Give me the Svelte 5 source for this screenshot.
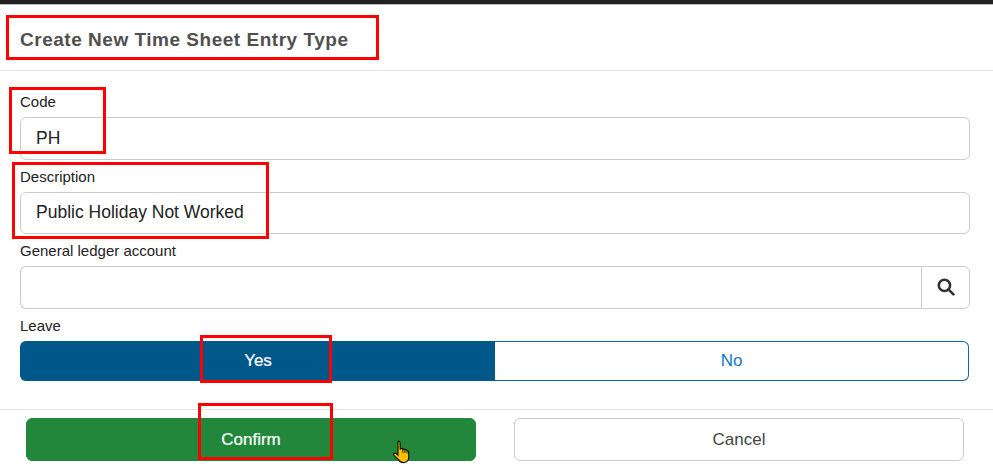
<script lang="ts">
  interface Field {
    label: string;
    value: string;
  }

  const fields: Field[] = [
    { label: 'Code', value: 'PH' },
    { label: 'Description', value: 'Public Holiday Not Worked' }
  ];

  // red boxes drawn over the screenshot
  const marks = [
    { x: 6, y: 15, w: 373, h: 45 },
    { x: 9, y: 87, w: 97, h: 67 },
    { x: 12, y: 162, w: 257, h: 77 },
    { x: 200, y: 335, w: 132, h: 48 },
    { x: 198, y: 403, w: 135, h: 57 }
  ];

  let leave = $state(true);
</script>

<div class="modal">
  <div class="topbar"></div>
  <header class="head">
    <h4>Create New Time Sheet Entry Type</h4>
  </header>

  <div class="body">
    {#each fields as field}
      <div class="field">
        <span class="label">{field.label}</span>
        <input type="text" class="control" value={field.value} />
      </div>
    {/each}

    <div class="field">
      <span class="label">General ledger account</span>
      <div class="group">
        <input type="text" class="control grouped" />
        <button class="search" aria-label="Search">
          <svg width="18" height="18" viewBox="0 0 16 16" fill="none" stroke="#333" stroke-width="2.3">
            <circle cx="6.6" cy="6.6" r="5" />
            <path d="M10.3 10.3 L14.6 14.6" stroke-linecap="round" />
          </svg>
        </button>
      </div>
    </div>

    <div class="field">
      <span class="label">Leave</span>
      <div class="toggle">
        <button class="opt yes" class:on={leave} onclick={() => (leave = true)}>Yes</button>
        <button class="opt no" class:on={!leave} onclick={() => (leave = false)}>No</button>
      </div>
    </div>
  </div>

  <footer class="foot">
    <button class="btn confirm">Confirm</button>
    <button class="btn cancel">Cancel</button>
  </footer>

  {#each marks as m}
    <div class="mark" style="left:{m.x}px;top:{m.y}px;width:{m.w}px;height:{m.h}px"></div>
  {/each}

  <svg class="cursor" width="20" height="24" viewBox="0 0 20 24">
    <path
      d="M6 1.5 C6.8 .8 8 1.2 8 2.5 L8.3 9 L9.2 8.6 C10 8.3 10.6 8.6 10.9 9.2 C11.6 8.8 12.6 9 12.9 9.8 C13.7 9.5 14.6 9.8 15 10.6 C15.8 10.4 16.5 11 16.6 12 L16.8 16.5 C16.8 19.5 15.4 22 12.5 22.5 C9.5 22.9 7.6 21.6 6.4 19.6 L2.2 15.6 C1.4 14.8 1.5 13.6 2.5 13.2 C3.4 12.9 4.4 13.5 6 15 Z"
      fill="#ffbf00"
      stroke="#141414"
      stroke-width="1.2"
    />
    <path d="M10.9 9.2 V13 M12.9 9.8 V13 M15 10.6 V13.5" stroke="#141414" stroke-width=".9" fill="none" />
  </svg>
</div>

<style>
  :global(body) {
    margin: 0;
    background: #fff;
  }

  .modal {
    position: relative;
    width: 993px;
    height: 473px;
    overflow: hidden;
    background: #fff;
    font-family: "Liberation Sans", Arial, sans-serif;
    color: #222;
  }

  .topbar {
    height: 5px;
    background: #212121;
    border-bottom: 1px solid #bbb;
    box-sizing: border-box;
  }

  .head {
    height: 66px;
    box-sizing: border-box;
    border-bottom: 1px solid #e2e2e2;
    padding: 24px 0 0 20px;
  }

  h4 {
    margin: 0;
    font-size: 19px;
    line-height: 22px;
    font-weight: 700;
    letter-spacing: 0.52px;
    color: #505050;
  }

  .body {
    display: flex;
    flex-direction: column;
    gap: 7px;
    padding: 21px 23px 0 20px;
    height: 339px;
    box-sizing: border-box;
    border-bottom: 1px solid #e2e2e2;
  }

  .field {
    display: flex;
    flex-direction: column;
    gap: 6px;
  }

  .label {
    font-size: 15px;
    line-height: 19px;
    height: 19px;
  }

  .control {
    height: 42.5px;
    box-sizing: border-box;
    width: 100%;
    padding: 0 15px;
    border: 1px solid #ccc;
    border-radius: 6px;
    background: #fff;
    font-family: inherit;
    font-size: 17.5px;
    color: #222;
    outline: none;
  }

  .group {
    display: flex;
    height: 42.5px;
  }

  .grouped {
    flex: 1;
    border-right: none;
    border-radius: 6px 0 0 6px;
  }

  .search {
    width: 49px;
    padding: 0;
    display: flex;
    align-items: center;
    justify-content: center;
    background: #fff;
    border: 1px solid #ccc;
    border-radius: 0 6px 6px 0;
  }

  .toggle {
    display: flex;
    height: 40px;
    width: 949px;
  }

  .opt {
    padding: 0;
    font-family: inherit;
    font-size: 17px;
    background: #fff;
    color: #0f7ac0;
    border: 1px solid #0a6aa8;
    box-sizing: border-box;
  }

  .yes {
    width: 475px;
    border-radius: 6px 0 0 6px;
    border-right: none;
  }

  .no {
    flex: 1;
    border-radius: 0 6px 6px 0;
    border-left: none;
  }

  .opt.on {
    background: #00578a;
    border-color: #00578a;
    color: #fff;
    -webkit-text-stroke: 0.2px currentColor;
  }

  .foot {
    display: flex;
    gap: 38px;
    padding: 8px 29px 0 26px;
  }

  .btn {
    flex: 1;
    height: 43px;
    padding: 0;
    box-sizing: border-box;
    border-radius: 6px;
    font-family: inherit;
    font-size: 17px;
  }

  .confirm {
    background: #22873b;
    border: 1px solid #22873b;
    color: #fff;
    -webkit-text-stroke: 0.2px currentColor;
  }

  .cancel {
    background: #fff;
    border: 1px solid #ccc;
    color: #444;
  }

  .mark {
    position: absolute;
    box-sizing: border-box;
    border: 3px solid #f00;
    pointer-events: none;
  }

  .cursor {
    position: absolute;
    left: 392px;
    top: 440px;
  }
</style>
